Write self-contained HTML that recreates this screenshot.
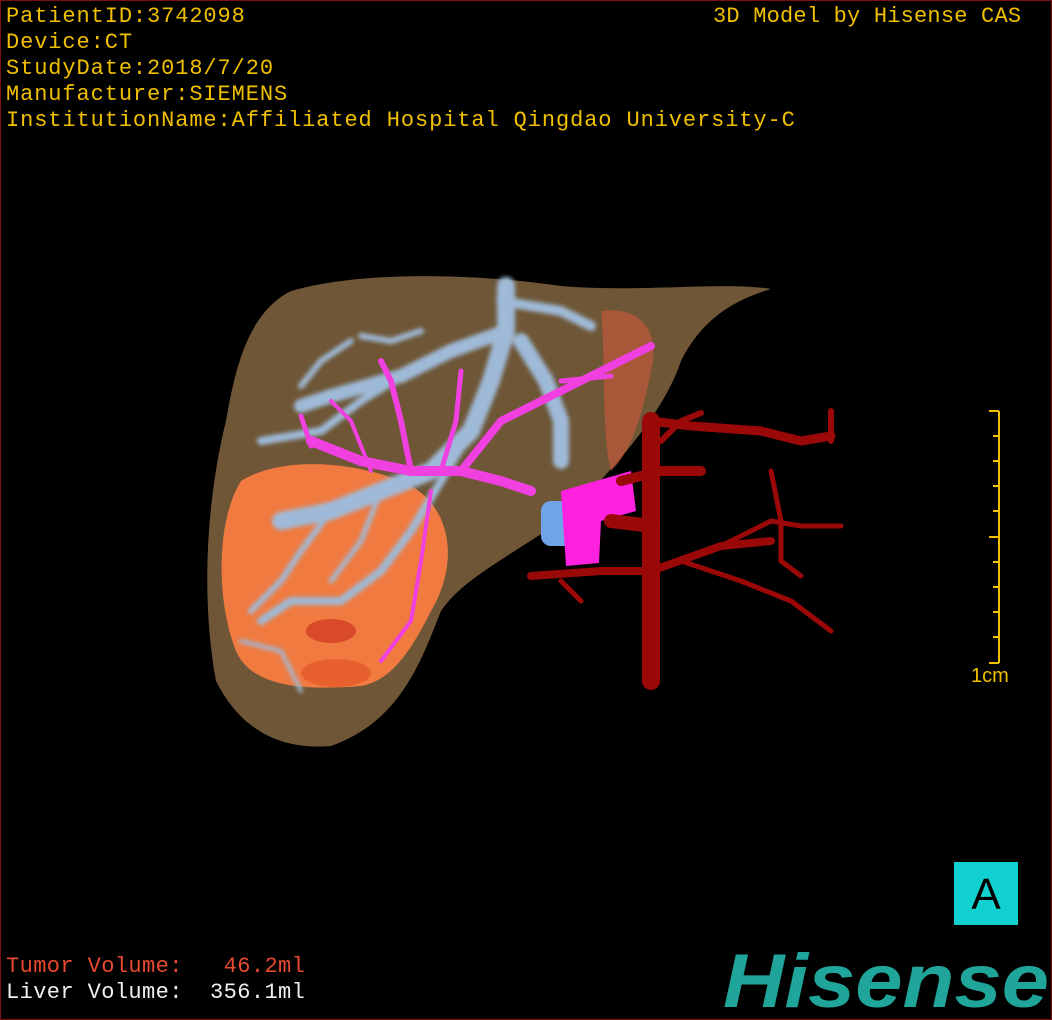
<!DOCTYPE html>
<html><head><meta charset="utf-8"><style>
html,body{margin:0;padding:0;background:#000;}
#c{position:relative;width:1050px;height:1018px;border:1px solid #7a1010;overflow:hidden;background:#000;}
.t{position:absolute;font-family:"Liberation Mono",monospace;font-size:22px;color:#f0c000;letter-spacing:0.9px;white-space:pre;line-height:26px;}
</style></head><body><div id="c">
<svg width="1050" height="1018" style="position:absolute;left:0;top:0">
<defs><filter id="b"><feGaussianBlur stdDeviation="2"/></filter></defs>
<path d="M290 290 C360 270 470 272 560 285 C640 292 720 280 770 288 C730 300 700 320 680 360 C660 420 600 480 560 520 C500 560 460 580 440 610 C420 660 400 720 330 745 C270 750 235 720 215 680 C200 600 205 500 225 420 C235 360 250 310 290 290 Z" fill="#6e5636"/>
<path d="M600 310 C640 305 660 330 650 370 C640 420 630 450 610 470 C600 430 605 360 600 310 Z" fill="#c05a3a" opacity="0.7"/>
<path d="M240 480 C280 455 350 460 400 480 C450 500 460 560 430 610 C410 650 390 680 360 685 C300 690 250 685 235 650 C215 600 215 520 240 480 Z" fill="#f07a40"/>
<ellipse cx="330" cy="630" rx="25" ry="12" fill="#d84a2a"/>
<ellipse cx="335" cy="672" rx="35" ry="14" fill="#e8602e"/>
<g stroke="#9fbad8" fill="none" stroke-linecap="round" filter="url(#b)">
<path d="M505 285 L505 330 L490 380 L470 430 L430 470 L380 490 L330 510 L280 520" stroke-width="18"/>
<path d="M505 330 L450 350 L400 375 L330 395 L300 405" stroke-width="14"/>
<path d="M500 300 L560 310 L590 325" stroke-width="10"/>
<path d="M520 340 L545 380 L560 420 L560 460" stroke-width="16"/>
<path d="M400 375 L360 400 L320 430 L260 440" stroke-width="8"/>
<path d="M470 430 L440 480 L410 530 L380 570 L340 600 L290 600 L260 620" stroke-width="8"/>
<path d="M330 510 L300 550 L280 580 L250 610" stroke-width="6"/>
<path d="M380 490 L360 540 L330 580" stroke-width="5"/>
<path d="M350 340 L320 360 L300 385" stroke-width="6"/>
<path d="M420 330 L390 340 L360 335" stroke-width="6"/>
<path d="M240 640 L280 650 L300 690" stroke-width="4"/>
</g>
<rect x="540" y="500" width="35" height="45" rx="10" fill="#6fa4e8"/>
<g stroke="#f040e0" fill="none" stroke-linecap="round">
<path d="M310 440 L360 460 L410 470 L460 470 L500 480 L530 490" stroke-width="10"/>
<path d="M460 470 L500 420 L560 390 L620 360 L650 345" stroke-width="8"/>
<path d="M410 470 L400 420 L390 380 L380 360" stroke-width="6"/>
<path d="M440 470 L455 420 L460 370" stroke-width="5"/>
<path d="M300 415 L310 445" stroke-width="5"/>
<path d="M370 470 L350 420 L330 400" stroke-width="4"/>
<path d="M430 490 L420 560 L410 620 L380 660" stroke-width="4"/>
<path d="M560 380 L610 375" stroke-width="5"/>
</g>
<path d="M560 490 L630 470 L635 510 L600 520 L598 562 L565 565 Z" fill="#ff20e0"/>
<g stroke="#9a0808" fill="none" stroke-linecap="round">
<path d="M650 420 L650 680" stroke-width="18"/>
<path d="M650 420 L690 425 L760 430 L800 440 L830 435" stroke-width="9"/>
<path d="M830 410 L830 440" stroke-width="6"/>
<path d="M620 480 L660 470 L700 470" stroke-width="10"/>
<path d="M610 520 L650 525" stroke-width="14"/>
<path d="M530 575 L600 570 L650 570 L720 545 L770 540" stroke-width="8"/>
<path d="M680 560 L740 580 L790 600 L830 630" stroke-width="5"/>
<path d="M720 545 L770 520 L800 525 L840 525" stroke-width="5"/>
<path d="M770 470 L780 520 L780 560 L800 575" stroke-width="5"/>
<path d="M560 580 L580 600" stroke-width="5"/>
<path d="M660 440 L680 420 L700 412" stroke-width="6"/>
</g>
<g stroke="#f0c000" stroke-width="2">
<line x1="998" y1="410" x2="998" y2="662"/>
<line x1="988" y1="410" x2="998" y2="410"/><line x1="988" y1="662" x2="998" y2="662"/>
<line x1="992" y1="435" x2="998" y2="435"/><line x1="992" y1="460" x2="998" y2="460"/>
<line x1="992" y1="485" x2="998" y2="485"/><line x1="992" y1="510" x2="998" y2="510"/>
<line x1="988" y1="536" x2="998" y2="536"/><line x1="992" y1="561" x2="998" y2="561"/>
<line x1="992" y1="586" x2="998" y2="586"/><line x1="992" y1="611" x2="998" y2="611"/>
<line x1="992" y1="636" x2="998" y2="636"/>
</g>
<text x="970" y="681" fill="#f0c000" font-family="Liberation Sans,sans-serif" font-size="20">1cm</text>
<rect x="953" y="861" width="64" height="63" fill="#10d0d0"/>
<text x="985" y="908" text-anchor="middle" fill="#000" font-family="Liberation Sans,sans-serif" font-size="44">A</text>
<text x="722" y="1006" fill="#1fa59a" font-family="Liberation Sans,sans-serif" font-weight="bold" font-style="italic" font-size="76" textLength="326" lengthAdjust="spacingAndGlyphs">Hisense</text>
</svg>
<div class="t" style="left:5px;top:3px">PatientID:3742098
Device:CT
StudyDate:2018/7/20
Manufacturer:SIEMENS
InstitutionName:Affiliated Hospital Qingdao University-C</div>
<div class="t" style="left:712px;top:3px;letter-spacing:0.2px">3D Model by Hisense CAS</div>
<div class="t" style="left:5px;top:953px;color:#e84a30;letter-spacing:0.4px">Tumor Volume:   46.2ml</div>
<div class="t" style="left:5px;top:979px;color:#f0f0f0;letter-spacing:0.4px">Liver Volume:  356.1ml</div>
</div></body></html>
